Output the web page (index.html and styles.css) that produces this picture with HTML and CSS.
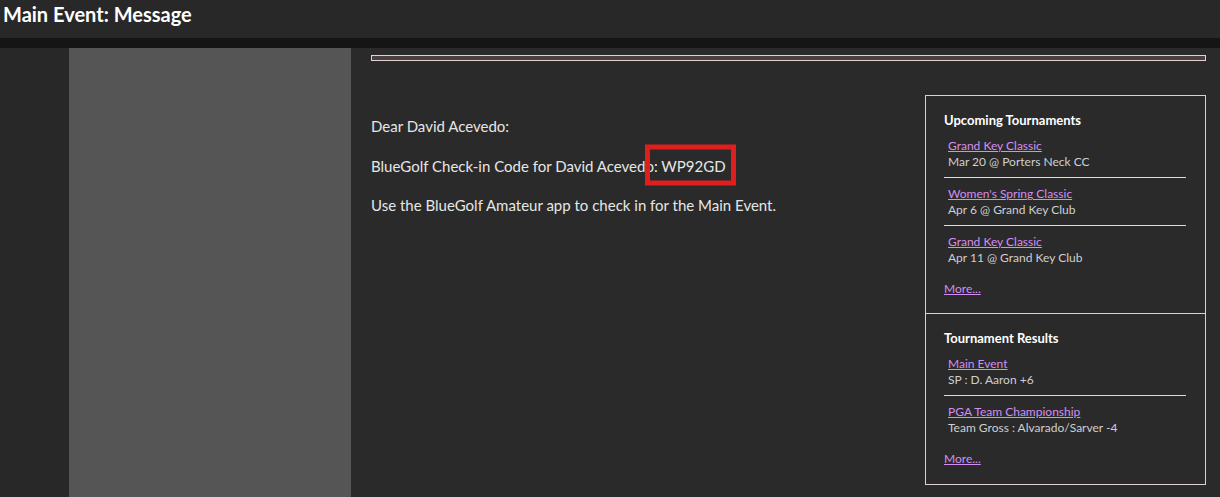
FILE: index.html
```html
<!DOCTYPE html>
<html>
<head>
<meta charset="utf-8">
<title>Main Event: Message</title>
<link rel="stylesheet" href="styles.css">
</head>
<body>
<header class="topbar">
  <h1 class="title">Main Event: Message</h1>
</header>
<div class="band"></div>
<div class="layout">
  <div class="edge"></div>
  <div class="leftcol"></div>
  <main class="main">
    <div class="bar"></div>
    <div class="content">
      <div class="message">
        <p>Dear David Acevedo:</p>
        <p>BlueGolf Check-in Code for David Aceved<span class="mark">o: WP92GD</span></p>
        <p>Use the BlueGolf Amateur app to check in for the Main Event.</p>
      </div>
      <aside class="sidebar">
        <section class="panel">
          <h2 class="panel-title">Upcoming Tournaments</h2>
          <div class="item">
            <a href="#" class="item-link">Grand Key Classic</a>
            <div class="item-sub">Mar 20 @ Porters Neck CC</div>
          </div>
          <div class="item">
            <a href="#" class="item-link">Women's Spring Classic</a>
            <div class="item-sub">Apr 6 @ Grand Key Club</div>
          </div>
          <div class="item last">
            <a href="#" class="item-link">Grand Key Classic</a>
            <div class="item-sub">Apr 11 @ Grand Key Club</div>
          </div>
          <a href="#" class="more">More...</a>
        </section>
        <section class="panel">
          <h2 class="panel-title">Tournament Results</h2>
          <div class="item">
            <a href="#" class="item-link">Main Event</a>
            <div class="item-sub">SP : D. Aaron +6</div>
          </div>
          <div class="item last">
            <a href="#" class="item-link">PGA Team Championship</a>
            <div class="item-sub">Team Gross : Alvarado/Sarver -4</div>
          </div>
          <a href="#" class="more">More...</a>
        </section>
      </aside>
    </div>
  </main>
</div>
</body>
</html>
```
FILE: styles.css
```css
html, body {
  margin: 0;
  padding: 0;
}
body {
  background: #2a2a2a;
  font-family: "Segoe UI", Lato, "Noto Sans", sans-serif;
  color: #e6e6e6;
  height: 497px;
  overflow: hidden;
}
.topbar {
  height: 38px;
  background: #282828;
}
.title {
  margin: 0;
  padding-left: 3px;
  font-size: 20px;
  line-height: 28px;
  font-weight: 700;
  color: #ffffff;
}
.band {
  height: 10px;
  background: #151515;
}
.layout {
  display: flex;
  height: 449px;
}
.edge {
  width: 69px;
  background: #282828;
}
.leftcol {
  width: 282px;
  background: #555555;
}
.main {
  flex: 1;
  padding: 7px 14px 0 20px;
  background: #2a2a2a;
}
.bar {
  height: 4px;
  border: 1px solid #e2d2d2;
  background: #4b4041;
}
.content {
  display: flex;
  margin-top: 34px;
}
.message {
  flex: 1;
  padding-top: 21px;
  font-size: 15px;
  line-height: 20px;
}
.message p {
  margin: 0 0 19.5px 0;
}
.mark {
  position: relative;
}
.mark::after {
  content: "";
  position: absolute;
  left: 0;
  right: -10px;
  top: 50%;
  height: 31px;
  margin-top: -1px;
  transform: translateY(-50%);
  border: 5px solid #e01e1e;
}
.sidebar {
  width: 279px;
  border: 1px solid #ddd0d0;
}
.panel {
  padding: 16px 19px 16px 18px;
}
.panel + .panel {
  border-top: 1px solid #ddd0d0;
}
.panel-title {
  margin: 0 0 9px 0;
  font-size: 13px;
  line-height: 17px;
  font-weight: 700;
  color: #ffffff;
}
.item {
  padding: 0 0 7px 4px;
  margin-bottom: 8px;
  border-bottom: 1px solid #dcdcdc;
  font-size: 12px;
  line-height: 16px;
}
.item.last {
  border-bottom: none;
  margin-bottom: 0;
  padding-bottom: 15px;
}
.item-link, .more {
  color: #d38ef3;
  text-decoration: underline;
}
.item-sub {
  color: #cfcfcf;
}
.more {
  display: block;
  width: max-content;
  font-size: 12px;
  line-height: 16px;
}
.panel:last-child .more {
  margin-bottom: 1px;
}
```
